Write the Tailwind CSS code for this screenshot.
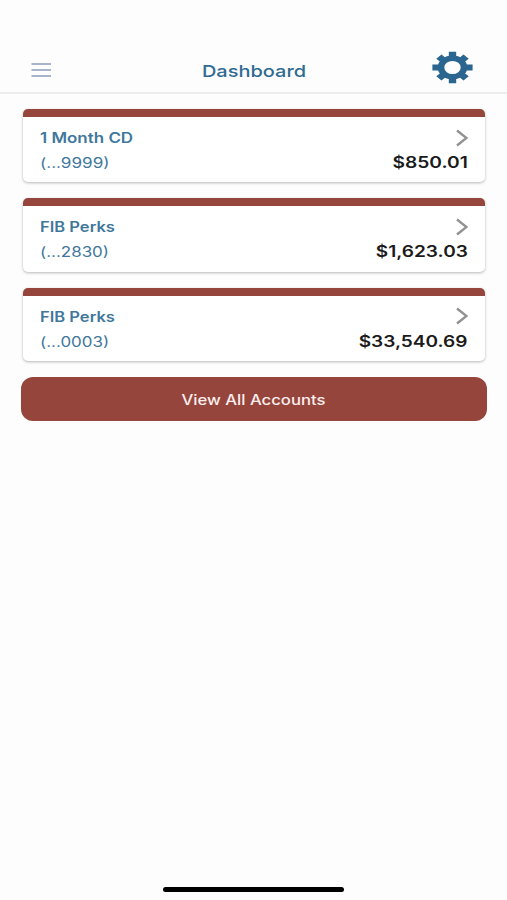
<!DOCTYPE html>
<html lang="en">
<head>
<meta charset="utf-8">
<title>Dashboard</title>
<script src="https://cdn.jsdelivr.net/npm/@tailwindcss/browser@4"></script>
</head>
<body class="bg-[#fdfdfd] font-['Inter',sans-serif]">
<div class="flex h-[900px] w-[507px] flex-col overflow-hidden">
  <header class="flex h-[94px] shrink-0 items-end justify-between border-b-2 border-[#ececed] pr-[34px] pb-[8px] pl-[31px]">
    <svg class="mb-[6px] h-[16px] w-[46px]" viewBox="0 0 46 16" fill="none" stroke="#8d9bb8" stroke-width="1.5"><path d="M.5 2h19.5M.5 8h19.5M.5 14h19.5"/></svg>
    <h1 class="mb-[1px] scale-x-[1.21] text-[16.5px] leading-[24px] font-medium text-[#2f6b91]">Dashboard</h1>
    <svg class="h-[33px] w-[41px]" viewBox="-50 -50 100 100" preserveAspectRatio="none">
      <g fill="#2b6690">
        <path fill-rule="evenodd" d="M0-36A36 36 0 1 1 0 36A36 36 0 1 1 0-36ZM0-20A20 20 0 1 0 0 20A20 20 0 1 0 0-20Z"/>
        <path d="M-9-48H9V-30H-9ZM-9 30H9V48H-9ZM-49-9H-30V9H-49ZM30-9H49V9H30Z"/>
        <path transform="rotate(45)" d="M-9-47H9V-30H-9ZM-9 30H9V47H-9ZM-47-9H-30V9H-47ZM30-9H47V9H30Z"/>
      </g>
    </svg>
  </header>
  <main class="flex flex-col gap-[16px] pt-[15px] pr-[22px] pl-[23px]">
    <section class="h-[73.4px] overflow-hidden rounded-[5px] border-t-8 border-[#96453c] bg-white pr-[17.5px] pl-[17px] shadow-[0_1px_3px_rgba(0,0,0,0.28)]">
      <div class="flex items-center justify-between pt-[8px] leading-[25px]">
        <h2 class="origin-left scale-x-[1.21] text-[14px] font-semibold text-[#40779b]">1 Month CD</h2>
        <svg class="h-[18px] w-[12px]" viewBox="0 0 12 18" fill="none" stroke="#929292" stroke-width="2.4"><path d="M1 1.5 10.5 9 1 16.5"/></svg>
      </div>
      <div class="flex items-center justify-between leading-[25px]">
        <span class="origin-left scale-x-[1.22] text-[14px] text-[#40779b]">(...9999)</span>
        <span class="origin-right scale-x-[1.24] text-[15.5px] font-semibold text-[#1b1b1b]">$850.01</span>
      </div>
    </section>
    <section class="h-[73.4px] overflow-hidden rounded-[5px] border-t-8 border-[#96453c] bg-white pr-[17.5px] pl-[17px] shadow-[0_1px_3px_rgba(0,0,0,0.28)]">
      <div class="flex items-center justify-between pt-[8px] leading-[25px]">
        <h2 class="origin-left scale-x-[1.18] text-[14px] font-semibold text-[#40779b]">FIB Perks</h2>
        <svg class="h-[18px] w-[12px]" viewBox="0 0 12 18" fill="none" stroke="#929292" stroke-width="2.4"><path d="M1 1.5 10.5 9 1 16.5"/></svg>
      </div>
      <div class="flex items-center justify-between leading-[25px]">
        <span class="origin-left scale-x-[1.21] text-[14px] text-[#40779b]">(...2830)</span>
        <span class="origin-right scale-x-[1.23] text-[15.5px] font-semibold text-[#1b1b1b]">$1,623.03</span>
      </div>
    </section>
    <section class="h-[73.4px] overflow-hidden rounded-[5px] border-t-8 border-[#96453c] bg-white pr-[17.5px] pl-[17px] shadow-[0_1px_3px_rgba(0,0,0,0.28)]">
      <div class="flex items-center justify-between pt-[8px] leading-[25px]">
        <h2 class="origin-left scale-x-[1.18] text-[14px] font-semibold text-[#40779b]">FIB Perks</h2>
        <svg class="h-[18px] w-[12px]" viewBox="0 0 12 18" fill="none" stroke="#929292" stroke-width="2.4"><path d="M1 1.5 10.5 9 1 16.5"/></svg>
      </div>
      <div class="flex items-center justify-between leading-[25px]">
        <span class="origin-left scale-x-[1.21] text-[14px] text-[#40779b]">(...0003)</span>
        <span class="origin-right scale-x-[1.23] text-[15.5px] font-semibold text-[#1b1b1b]">$33,540.69</span>
      </div>
    </section>
    <button class="-mr-[2px] -ml-[2.5px] flex h-[44px] items-center justify-center rounded-[12px] bg-[#96453c]">
      <span class="scale-x-[1.19] text-[14px] font-medium text-[#fbeeec]">View All Accounts</span>
    </button>
  </main>
  <div class="mt-auto mb-[8px] h-[5px] w-[181px] self-center rounded-full bg-black"></div>
</div>
</body>
</html>
